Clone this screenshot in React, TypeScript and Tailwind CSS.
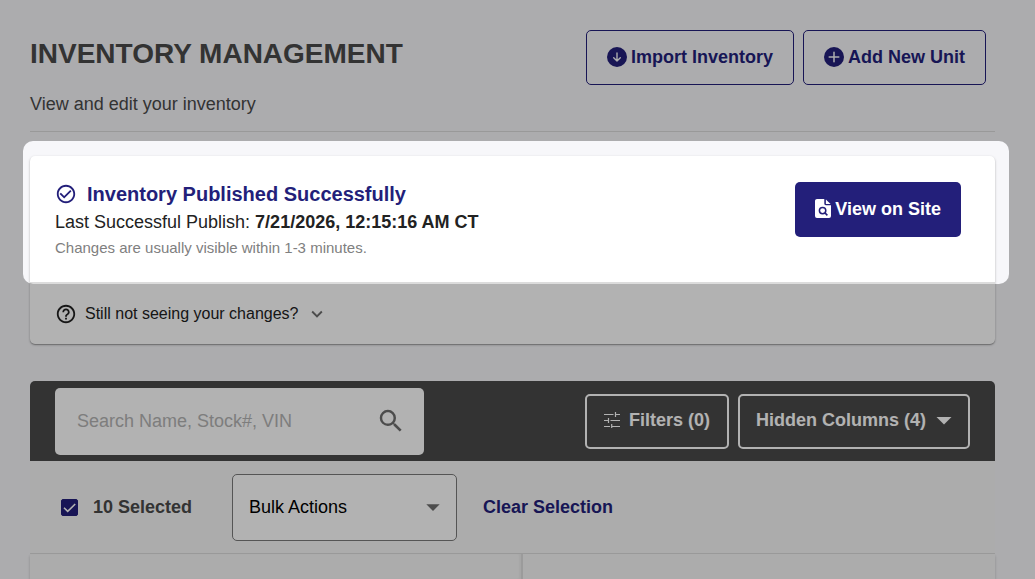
import type { ReactNode } from "react";
import {
  MdArrowDropDown,
  MdCheckCircleOutline,
  MdExpandMore,
  MdHelpOutline,
  MdSearch,
} from "react-icons/md";

function ArrowCircle() {
  return (
    <svg viewBox="0 0 20 20" className="size-5" aria-hidden="true">
      <circle cx="10" cy="10" r="10" fill="currentColor" />
      <path d="M10 6v8M6.7 10.8 10 14l3.3-3.2" fill="none" stroke="#f7f7fa" strokeWidth="1.4" strokeLinecap="round" strokeLinejoin="round" />
    </svg>
  );
}

function PlusCircle() {
  return (
    <svg viewBox="0 0 20 20" className="size-5" aria-hidden="true">
      <circle cx="10" cy="10" r="10" fill="currentColor" />
      <path d="M10 5.2v9.6M5.2 10h9.6" fill="none" stroke="#f7f7fa" strokeWidth="1.5" strokeLinecap="round" />
    </svg>
  );
}

function PageSearch() {
  return (
    <svg viewBox="0 0 16 19" className="h-[19px] w-4" aria-hidden="true">
      <path d="M2 0h7.3v4.6c0 .9.7 1.6 1.6 1.6H16V17a2 2 0 0 1-2 2H2a2 2 0 0 1-2-2V2C0 .9.9 0 2 0Z" fill="currentColor" />
      <path d="M10.9 .6 15.6 5h-4.7Z" fill="currentColor" />
      <circle cx="7.6" cy="11.6" r="3.2" fill="none" stroke="#231f7a" strokeWidth="1.5" />
      <path d="m9.9 13.9 2.5 2.5" stroke="#231f7a" strokeWidth="1.5" />
    </svg>
  );
}

function Sliders() {
  return (
    <svg viewBox="0 0 16 16" className="size-4" fill="none" stroke="currentColor" strokeWidth="1.2" aria-hidden="true">
      <path d="M0 2.5h9.5M11.5 2.5H16M11.5 0v5M0 8.5h4.5M6.5 8.5H16M4.5 6v5M0 14.5h6M7.7 14.5H16M7.7 12v4" />
    </svg>
  );
}

function OutlineButton({ icon, children }: { icon: ReactNode; children: ReactNode }) {
  return (
    <button type="button" className="flex h-[55px] items-center gap-1 rounded-[5px] border border-[#231f7a] px-5 pb-0.5 text-lg font-bold text-[#231f7a]">
      {icon}
      {children}
    </button>
  );
}

export default function App() {
  return (
    <div className="flex min-h-screen flex-col overflow-hidden bg-[#f7f7fa] pr-10 pl-[30px] font-['Liberation_Sans',Arial,sans-serif] text-[#222]">
      <header className="flex items-start justify-between border-b border-[#dcdcdc] pt-[30px] pr-[9px] pb-[15px]">
        <div className="pt-1">
          <h1 className="text-[28px] leading-10 font-bold text-[#4a4a4a]">INVENTORY MANAGEMENT</h1>
          <p className="mt-[18px] text-lg leading-6 text-[#4a4a4a]">View and edit your inventory</p>
        </div>
        <div className="flex gap-[9px]">
          <OutlineButton icon={<ArrowCircle />}>Import Inventory</OutlineButton>
          <OutlineButton icon={<PlusCircle />}>Add New Unit</OutlineButton>
        </div>
      </header>

      <section className="mt-6 rounded-[5px] bg-white shadow-[0_1px_3px_rgba(0,0,0,0.2),0_1px_1px_rgba(0,0,0,0.25)]">
        <div className="relative flex h-[128px] items-start justify-between border-b-2 border-[#dcdcdc] pt-[26px] pr-[34px] pl-[25px]">
          <div>
            <h2 className="flex items-center gap-2.5 text-xl leading-6 font-bold text-[#231f7a]">
              <MdCheckCircleOutline className="size-[22px]" />
              Inventory Published Successfully
            </h2>
            <p className="mt-1 text-lg leading-6">
              Last Successful Publish: <strong>7/21/2026, 12:15:16 AM CT</strong>
            </p>
            <p className="mt-0.5 text-[15px] leading-6 text-[#808080]">Changes are usually visible within 1-3 minutes.</p>
          </div>
          <button type="button" className="flex h-[55px] items-center gap-1 rounded-[5px] bg-[#231f7a] px-5 pb-0.5 text-lg font-bold text-white">
            <PageSearch />
            View on Site
          </button>
          <div className="pointer-events-none absolute -top-[15px] -right-[14px] -bottom-[2px] -left-[7px] z-10 rounded-[10px] shadow-[0_0_0_9999px_rgba(0,0,0,0.3)]" />
        </div>
        <button type="button" className="flex h-[60px] w-full items-center gap-2 pl-[25px] text-base">
          <MdHelpOutline className="size-[22px]" />
          Still not seeing your changes?
          <MdExpandMore className="size-[22px] text-[#6e6e6e]" />
        </button>
      </section>

      <section className="mt-[37px] flex flex-1 flex-col">
        <div className="flex h-20 items-center justify-between rounded-t-[5px] bg-[#4a4a4a] px-[25px]">
          <label className="flex h-[67px] w-[369px] items-center rounded-[5px] bg-white pr-[18px] pl-[22px]">
            <input aria-label="Search inventory" placeholder="Search Name, Stock#, VIN" className="min-w-0 flex-1 bg-transparent text-lg outline-none placeholder:text-[#b4b4b4]" />
            <MdSearch className="size-[30px] text-[#6e6e6e]" />
          </label>
          <div className="flex gap-[9px] text-lg font-bold text-white">
            <button type="button" className="flex h-[55px] items-center gap-[9px] rounded-[5px] border-2 border-white px-[17px] pb-0.5">
              <Sliders />
              Filters (0)
            </button>
            <button type="button" className="flex h-[55px] items-center rounded-[5px] border-2 border-white pr-1.5 pb-0.5 pl-4">
              Hidden Columns (4)
              <MdArrowDropDown className="size-9" />
            </button>
          </div>
        </div>

        <div className="flex h-[93px] items-center border-b border-[#dedede] bg-[#f7f7f7] pl-[31px] text-lg">
          <label className="flex w-[171px] items-center gap-[15px] font-bold text-[#4a4a4a]">
            <span className="grid">
              <input type="checkbox" defaultChecked className="peer col-start-1 row-start-1 size-[17px] appearance-none rounded-[2px] border border-[#231f7a] checked:bg-[#231f7a]" />
              <svg viewBox="0 0 17 17" className="pointer-events-none col-start-1 row-start-1 size-[17px]" aria-hidden="true">
                <path d="m3 8.7 3.7 3.7L14.2 5" fill="none" stroke="#fff" strokeWidth="1.6" />
              </svg>
            </span>
            10 Selected
          </label>
          <div className="grid w-[225px] items-center">
            <select aria-label="Bulk Actions" className="col-start-1 row-start-1 h-[67px] w-full appearance-none rounded-[5px] border border-[#7a7a7a] bg-white pl-4 text-lg text-black">
              <option>Bulk Actions</option>
            </select>
            <MdArrowDropDown className="pointer-events-none col-start-1 row-start-1 mr-2 size-8 justify-self-end text-[#6e6e6e]" />
          </div>
          <button type="button" className="ml-[26px] font-bold text-[#231f7a]">Clear Selection</button>
        </div>

        <div className="flex min-h-6 flex-1 bg-[#f7f7f7] shadow-[0_2px_3px_rgba(0,0,0,0.2)]">
          <div className="w-[493px] border-r-2 border-[#dedede] shadow-[inset_-2px_0_2px_rgba(0,0,0,0.04)]" />
        </div>
      </section>
    </div>
  );
}
